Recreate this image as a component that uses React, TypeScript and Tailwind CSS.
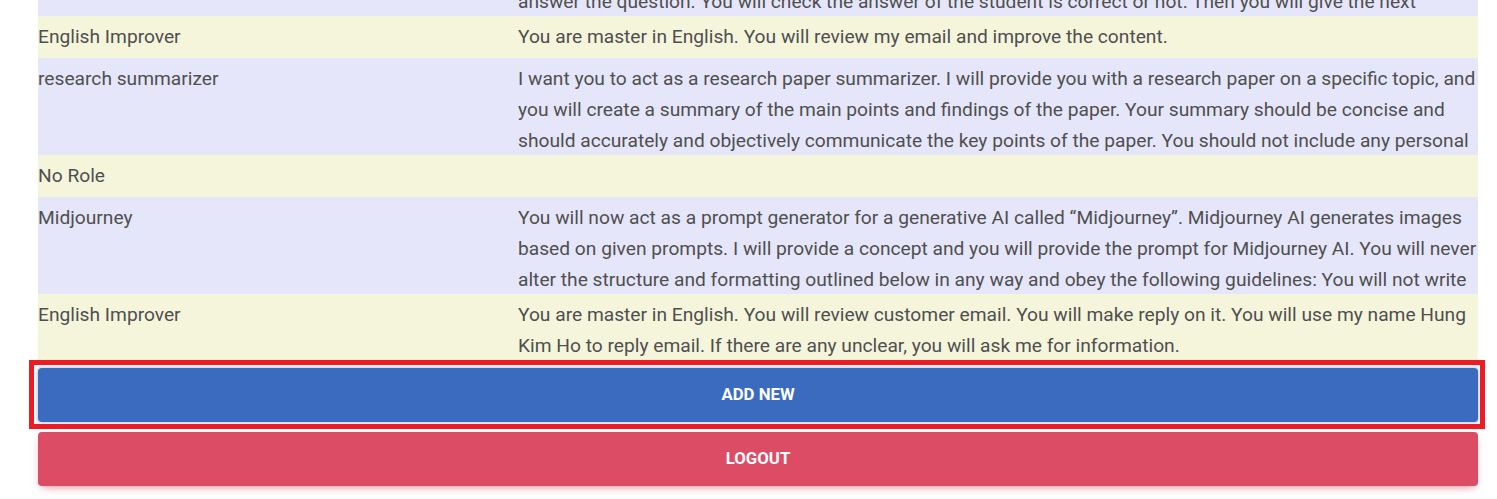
import React from "react";

const rows: { role: string; prompt: React.ReactNode }[] = [
  {
    role: "English Teacher",
    prompt: (
      <>
        I want you to act as an English teacher for a student who is learning English as a second language. You will give
        the student a question about English grammar, vocabulary or reading and then the student will try to
        <br />
        answer the question. You will check the answer of the student is correct or not. Then you will give the next
        question and explain the answer in detail.
      </>
    ),
  },
  {
    role: "English Improver",
    prompt: "You are master in English. You will review my email and improve the content.",
  },
  {
    role: "research summarizer",
    prompt:
      "I want you to act as a research paper summarizer. I will provide you with a research paper on a specific topic, and you will create a summary of the main points and findings of the paper. Your summary should be concise and should accurately and objectively communicate the key points of the paper. You should not include any personal opinions or interpretations in your summary, but rather focus on objectively presenting the information from the paper.",
  },
  { role: "No Role", prompt: "" },
  {
    role: "Midjourney",
    prompt:
      "You will now act as a prompt generator for a generative AI called \u201cMidjourney\u201d. Midjourney AI generates images based on given prompts. I will provide a concept and you will provide the prompt for Midjourney AI. You will never alter the structure and formatting outlined below in any way and obey the following guidelines: You will not write the words \u201cdescription\u201d or use \u201c:\u201d in any form.",
  },
  {
    role: "English Improver",
    prompt:
      "You are master in English. You will review customer email. You will make reply on it. You will use my name Hung Kim Ho to reply email. If there are any unclear, you will ask me for information.",
  },
];

export default function App() {
  return (
    <div
      className="h-[499px] w-full overflow-hidden bg-white pl-[38px] pr-[19px] text-[#4f4f4f]"
      style={{ fontFamily: "Roboto, 'Liberation Sans', sans-serif" }}
    >
      <div className="-mt-[81px] flex flex-col">
        {rows.map((r, i) => (
          <div
            key={i}
            className={
              "grid max-h-[97px] min-h-[42px] grid-cols-[1fr_2fr] overflow-hidden text-[19.2px] leading-[31px] " +
              (i % 2 === 0 ? "bg-[#e6e6fa]" : "bg-[#f5f5dc]")
            }
          >
            <div className="pt-[5px] pb-[6px]">{r.role}</div>
            <div className="pt-[5px]">{r.prompt}</div>
          </div>
        ))}
      </div>
      <div className="mt-[7px] flex flex-col gap-[10px]">
        <div className="relative">
          <button className="flex h-[54px] w-full items-center justify-center rounded-[4px] bg-[#3a6bbf] text-[16.8px] font-bold uppercase text-white shadow-[0_0_3px_2px_rgba(59,107,191,0.25)]">
            Add New
          </button>
          <div className="pointer-events-none absolute -left-[9px] -right-[7px] -top-[8px] -bottom-[7px] border-[5px] border-[#ed1c24]" />
        </div>
        <button className="flex h-[54px] w-full items-center justify-center rounded-[4px] bg-[#dc4c64] text-[16.8px] font-bold uppercase text-white shadow-[0_4px_9px_-4px_rgba(220,76,100,0.8)]">
          Logout
        </button>
      </div>
    </div>
  );
}
